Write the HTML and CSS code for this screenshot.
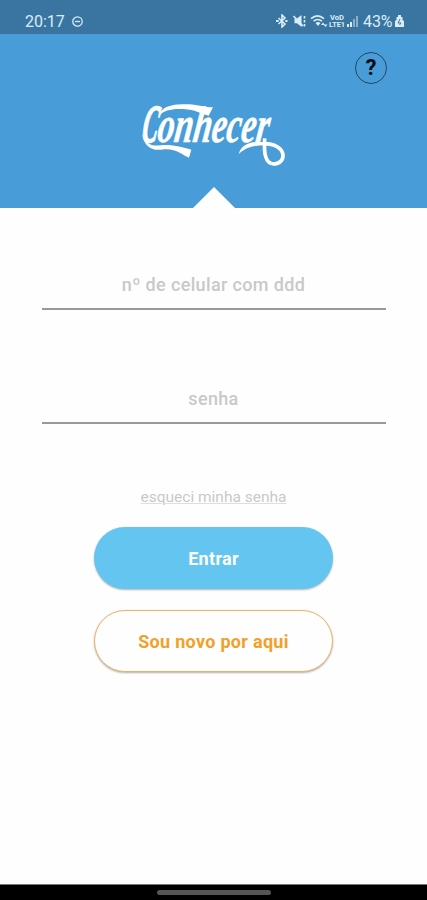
FILE: index.html
```html
<!DOCTYPE html>
<html lang="pt-BR">
<head>
  <meta charset="UTF-8">
  <meta name="viewport" content="width=device-width, initial-scale=1.0">
  <title>Conhecer</title>
  <link rel="stylesheet" href="styles.css">
</head>
<body>
<div class="status-bar">
  <span class="clock">20:17</span>
  <svg class="dnd" width="11" height="11" viewBox="0 0 11 11"><circle cx="5.5" cy="5.5" r="4.7"/><path d="M3 5.5h5"/></svg>
  <div class="status-icons">
    <svg width="84" height="14" viewBox="0 0 84 14">
      <!-- bluetooth -->
      <path class="line" d="M2.500 4l6.500 6-3 3V1l3 3-6.500 6"/>
      <path class="fill" d="M0 6h2.700v2H0zM9.300 6h2.200v2H9.300z"/>
      <!-- muted -->
      <path class="fill" d="M18.500 4.500H21l4.500-3.500v12L21 9.300h-2.500z"/>
      <path class="line" d="M17.500 2l9.500 10M28.500 2v2.500M28.500 6v2.500M28.500 10v2.500"/>
      <!-- wifi -->
      <path class="line" d="M35 4.600c4-3.400 9-3.400 13 0M37.500 7.200c2.500-2 6-2 8.500 0"/>
      <path class="fill" d="M39.500 9c1.700-1.300 3.200-1.300 5 0L42 12zM45 11l2-2.500 2 2.500zM47.500 10.500h4L49.500 13z"/>
      <text x="54" y="6" textLength="14" lengthAdjust="spacingAndGlyphs">VoD</text>
      <text x="53" y="13" textLength="16" lengthAdjust="spacingAndGlyphs">LTE1</text>
      <!-- signal -->
      <path class="fill" d="M71 10h2v3h-2zM74 8h2v5h-2z"/>
      <path class="fill faded" d="M77 5h2v8h-2zM80 2h2v11h-2z"/>
    </svg>
    <span class="percent">43%</span>
    <svg width="9" height="12" viewBox="0 0 9 12"><path class="fill" d="M3 0h3v2h1.500v3L9 6v6H0V6l1.500-1V2H3z"/><path class="bolt" d="M5 4L3 8h3L4.500 10"/></svg>
  </div>
</div>

<header class="header">
  <button class="help" aria-label="Ajuda">?</button>
  <svg class="logo" width="150" height="100" viewBox="30 -15 450 300">
    <text x="36" y="156" transform="translate(22 0) skewX(-8)"><tspan class="initial" textLength="46" lengthAdjust="spacingAndGlyphs">C</tspan><tspan textLength="334" lengthAdjust="spacingAndGlyphs">onhecer</tspan></text>
    <!-- swashes -->
    <path d="M92 76C94 48 138 40 180 43c28 2 48 9 72 9l-13 25c-28-7-38-18-76-20-34-2-59 4-71 19z"/>
    <path d="M39 128c6 30 27 42 56 38 36-4 62 6 92 13l-7 24c-24-9-38-30-83-24-32 4-55-15-58-51z"/>
    <path d="M329 192c8-27 31-37 62-36l26 1v9c-34-1-62 2-88 26z"/>
    <path class="loop" d="M407 145c-3 48 3 76 27 77 17 0 29-12 28-27-2-22-27-34-57-34"/>
  </svg>
  <div class="notch"></div>
</header>

<main class="login">
  <input class="field" type="text" placeholder="nº de celular com ddd">
  <input class="field" type="password" placeholder="senha">
  <a class="forgot">esqueci minha senha</a>
  <button class="btn enter">Entrar</button>
  <button class="btn new">Sou novo por aqui</button>
</main>

<div class="nav-bar"><div class="handle"></div></div>
</body>
</html>
```
FILE: styles.css
```css
* {
  box-sizing: border-box;
}
body {
  margin: 0;
  height: 900px;
  display: flex;
  flex-direction: column;
  font-family: Roboto, sans-serif;
  background-color: #fefefe;
  overflow: hidden;
}
.status-bar {
  height: 34px;
  padding: 8px 23px 0 25px;
  display: flex;
  align-items: center;
  background-color: #3a75a1;
  color: #d9edf7;
  font-size: 16px;
}
.clock {
  width: 40px;
}
.dnd {
  margin-left: 7px;
  fill: none;
  stroke: #d9edf7;
  stroke-width: 1.3;
}
.status-icons {
  margin-left: auto;
  display: flex;
  align-items: center;
}
.status-icons text {
  font-size: 7px;
  font-weight: bold;
  fill: #d9edf7;
}
.percent {
  width: 32px;
  margin-left: 3px;
  letter-spacing: -0.1px;
}
.line {
  fill: none;
  stroke: #d9edf7;
  stroke-width: 1.6;
}
.fill {
  fill: #d9edf7;
}
.faded {
  opacity: 0.5;
}
.bolt {
  fill: none;
  stroke: #3a75a1;
}
.header {
  height: 174px;
  display: flex;
  flex-direction: column;
  align-items: center;
  background-color: #489dd8;
}
.help {
  width: 32px;
  height: 32px;
  margin: 18px 40px 0 0;
  padding: 0;
  align-self: flex-end;
  border: 1px solid #25475f;
  border-radius: 50%;
  background: none;
  color: #050a0e;
  font: bold 22px/28px Roboto, sans-serif;
}
.logo {
  margin-top: 1px;
  fill: #fff;
  font-family: "Liberation Serif", serif;
  font-size: 154px;
  font-style: italic;
  font-weight: bold;
}
.logo text {
  stroke: #fff;
  stroke-width: 1.5;
}
.initial {
  font-size: 160px;
  stroke-width: 5;
}
.loop {
  fill: none;
  stroke: #fff;
  stroke-width: 11;
}
.notch {
  margin: auto 0 0 1px;
  width: 42px;
  height: 21px;
  background-color: #fefefe;
  clip-path: polygon(50% 0, 100% 100%, 0 100%);
}
.login {
  flex: 1;
  padding-top: 52px;
  display: flex;
  flex-direction: column;
  align-items: center;
}
.field {
  width: 344px;
  height: 50px;
  margin-bottom: 64px;
  padding: 1px 0 0;
  border: 0;
  border-bottom: 2px solid #989998;
  background: none;
  text-align: center;
  font: 500 18px Roboto, sans-serif;
  letter-spacing: 0.35px;
}
.field::placeholder {
  color: #c9c9c9;
  opacity: 1;
}
.forgot {
  height: 20px;
  line-height: 18px;
  margin-bottom: 19px;
  color: #c9c9c9;
  font-size: 15.5px;
  text-decoration: underline;
  text-decoration-color: #dedede;
  text-decoration-thickness: 1px;
}
.btn {
  width: 239px;
  height: 62px;
  padding: 0;
  border: 0;
  border-radius: 31px;
  font: bold 18px Roboto, sans-serif;
  letter-spacing: 0.3px;
  box-shadow: 0 1px 2px rgba(0, 0, 0, 0.3);
}
.enter {
  margin-bottom: 21px;
  background-color: #64c5f0;
  color: #fff;
}
.new {
  border: 1px solid #e9b568;
  background-color: #fefefe;
  color: #f2a02a;
}
.nav-bar {
  height: 16px;
  padding-top: 5px;
  border-top: 1px solid #777;
  background-color: #000;
}
.handle {
  width: 114px;
  height: 5px;
  margin: 0 auto;
  border-radius: 3px;
  background-color: #555;
}
```
